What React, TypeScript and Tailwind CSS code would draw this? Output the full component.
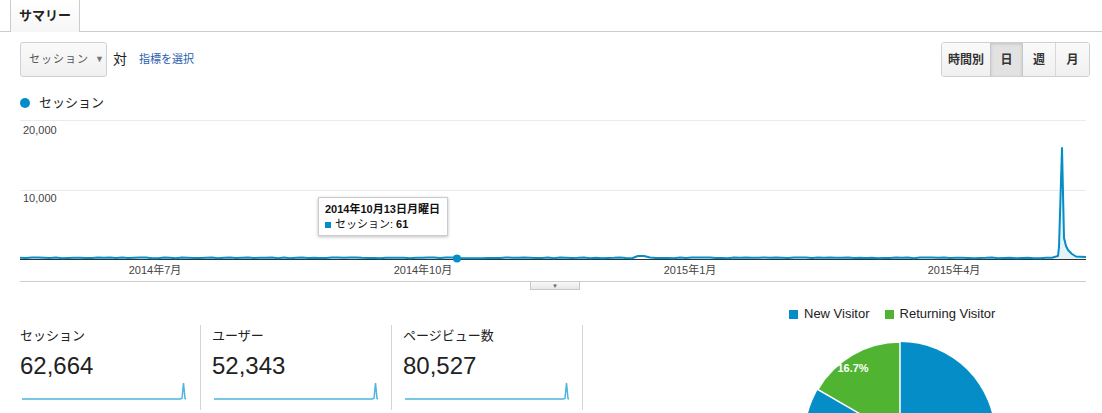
import React from "react";

const font = { fontFamily: '"Liberation Sans", Arial, "Noto Sans CJK JP", sans-serif' };

// flat part of the session line, with small wiggles
function flatPoints() {
  const pts: string[] = [];
  let seed = 7;
  for (let x = 0; x <= 1036; x += 6) {
    seed = (seed * 9301 + 49297) % 233280;
    let y = 142.4 + (seed / 233280) * 0.9;
    if (x >= 618 && x <= 624) y = 141;
    pts.push(`${x},${y.toFixed(1)}`);
  }
  return pts;
}

const spike = ["1038,141", "1039,132", "1042,33", "1044,123", "1046,131", "1048,135", "1052,139", "1056,141.5", "1066,142"];

function Spark() {
  return (
    <svg width="170" height="22" className="block">
      <path d="M2,18 L160,18 L162,17.5 L163.5,2 L165,17.5 L166,18" fill="none" stroke="#50b4e0" strokeWidth="1.5" />
    </svg>
  );
}

function Card({ label, value, first }: { label: string; value: string; first?: boolean }) {
  return (
    <div className={first ? "w-[181px] h-[85px] border-r border-[#d5d5d5]" : "w-[191px] h-[85px] pl-[11px] border-r border-[#d5d5d5]"}>
      <div className="text-[13px] text-[#222] leading-[16px] mt-[3px] whitespace-nowrap">{label}</div>
      <div className="text-[24px] text-[#222] leading-[28px] mt-[8px]">{value}</div>
      <div className="mt-[1px]">
        <Spark />
      </div>
    </div>
  );
}

export default function App() {
  const line = [...flatPoints(), ...spike].join(" ");
  const area = `M1037,144 L1038,141 L1039,132 L1042,33 L1044,123 L1046,131 L1048,135 L1052,139 L1056,141.5 L1066,142 L1066,144 Z`;

  return (
    <div className="w-[1102px] h-[413px] overflow-hidden bg-white relative" style={font}>
      {/* tabs */}
      <div className="h-[32px] border-b border-[#cccccc] flex">
        <div className="ml-[10px] w-[70px] h-[32px] border-x border-[#cccccc] bg-gradient-to-b from-white to-[#f6f6f6] -mb-px flex items-center justify-center text-[13px] font-bold text-[#222]">
          サマリー
        </div>
      </div>

      {/* controls */}
      <div className="flex justify-between items-center pl-[20px] pr-[12px] mt-[10px] h-[35px]">
        <div className="flex items-center">
          <div className="w-[87px] h-[35px] shrink-0 whitespace-nowrap border border-[#d0d0d0] rounded-[3px] bg-gradient-to-b from-[#fafafa] to-[#f0f0f0] flex items-center pl-[8px] text-[11px] tracking-[1px] text-[#555]">
            セッション
            <span className="ml-[6px] text-[9px] text-[#777]">▼</span>
          </div>
          <span className="ml-[6px] text-[14px] text-[#222]">対</span>
          <span className="ml-[12px] text-[11px] text-[#2a5db0]">指標を選択</span>
        </div>
        <div className="flex h-[35px] border border-[#d0d0d0] rounded-[3px] overflow-hidden text-[12px] font-bold text-[#333]">
          <div className="w-[48px] flex items-center justify-center bg-gradient-to-b from-[#fafafa] to-[#f0f0f0]">時間別</div>
          <div className="w-[33px] flex items-center justify-center bg-[#e2e2e2] border-x border-[#c8c8c8] shadow-[inset_0_1px_3px_rgba(0,0,0,0.15)]">日</div>
          <div className="w-[33px] flex items-center justify-center bg-gradient-to-b from-[#fafafa] to-[#f0f0f0] border-r border-[#d8d8d8]">週</div>
          <div className="w-[33px] flex items-center justify-center bg-gradient-to-b from-[#fafafa] to-[#f0f0f0]">月</div>
        </div>
      </div>

      {/* legend */}
      <div className="flex items-center pl-[20px] mt-[20px] h-[12px]">
        <span className="w-[10px] h-[10px] rounded-full bg-[#058dc7]" />
        <span className="ml-[9px] text-[13px] text-[#222]">セッション</span>
      </div>

      {/* chart */}
      <div className="relative ml-[20px] w-[1066px] mt-[6px]">
        <svg width="1066" height="166" className="block">
          <line x1="0" y1="5.5" x2="1066" y2="5.5" stroke="#ebebeb" />
          <line x1="0" y1="75.5" x2="1066" y2="75.5" stroke="#ebebeb" />
          <text x="3" y="19" fontSize="11" fill="#444" style={font}>20,000</text>
          <text x="3" y="87" fontSize="11" fill="#444" style={font}>10,000</text>
          <path d={area} fill="#e5f3f9" />
          <line x1="0" y1="144.5" x2="1066" y2="144.5" stroke="#333" />
          <polyline points={line} fill="none" stroke="#058dc7" strokeWidth="2" strokeLinejoin="round" />
          <circle cx="437" cy="143.5" r="4" fill="#058dc7" />
          <text x="135" y="159" fontSize="11" fill="#444" textAnchor="middle" style={font}>2014年7月</text>
          <text x="403" y="159" fontSize="11" fill="#444" textAnchor="middle" style={font}>2014年10月</text>
          <text x="670" y="159" fontSize="11" fill="#444" textAnchor="middle" style={font}>2015年1月</text>
          <text x="934" y="159" fontSize="11" fill="#444" textAnchor="middle" style={font}>2015年4月</text>
        </svg>
        <div className="border-t border-[#cccccc] flex justify-center">
          <div className="ml-[4px] w-[50px] h-[8px] border border-t-0 border-[#c8c8c8] bg-gradient-to-b from-[#f8f8f8] to-[#e8e8e8] flex items-center justify-center text-[6px] leading-none text-[#666]">
            ▼
          </div>
        </div>

        {/* tooltip */}
        <div className="absolute left-[298px] top-[82px] w-[130px] h-[39px] whitespace-nowrap bg-white border border-[#cccccc] shadow-[0_1px_3px_rgba(0,0,0,0.25)] pl-[6px] pt-[4px] text-[11px] text-[#111] leading-[15px]">
          <div className="font-bold">2014年10月13日月曜日</div>
          <div className="flex items-center">
            <span className="w-[6px] h-[6px] bg-[#058dc7] mr-[4px]" />
            <span>セッション: </span>
            <span className="font-bold ml-[3px]">61</span>
          </div>
        </div>
      </div>

      {/* bottom */}
      <div className="flex mt-[8px]">
        <div className="pl-[20px] pt-[27px] flex">
          <Card label="セッション" value="62,664" first />
          <Card label="ユーザー" value="52,343" />
          <Card label="ページビュー数" value="80,527" />
        </div>
        <div className="ml-[206px] pt-[11px]">
          <div className="flex items-center text-[13px] text-[#222] h-[10px]">
            <span className="w-[9px] h-[9px] bg-[#058dc7]" />
            <span className="ml-[6px]">New Visitor</span>
            <span className="ml-[15px] w-[9px] h-[9px] bg-[#50b432]" />
            <span className="ml-[6px]">Returning Visitor</span>
          </div>
          <div className="relative ml-[15px] mt-[22px]">
            <svg width="192" height="192" className="block">
              <circle cx="96" cy="96" r="95" fill="#058dc7" />
              <path d="M96,96 L96,1 A95,95 0 0 0 13.73,48.5 Z" fill="#50b432" stroke="#fff" strokeWidth="1.5" />
              <text x="49" y="31" fontSize="11" fontWeight="bold" fill="#fff" textAnchor="middle" style={font}>16.7%</text>
            </svg>
          </div>
        </div>
      </div>
    </div>
  );
}
